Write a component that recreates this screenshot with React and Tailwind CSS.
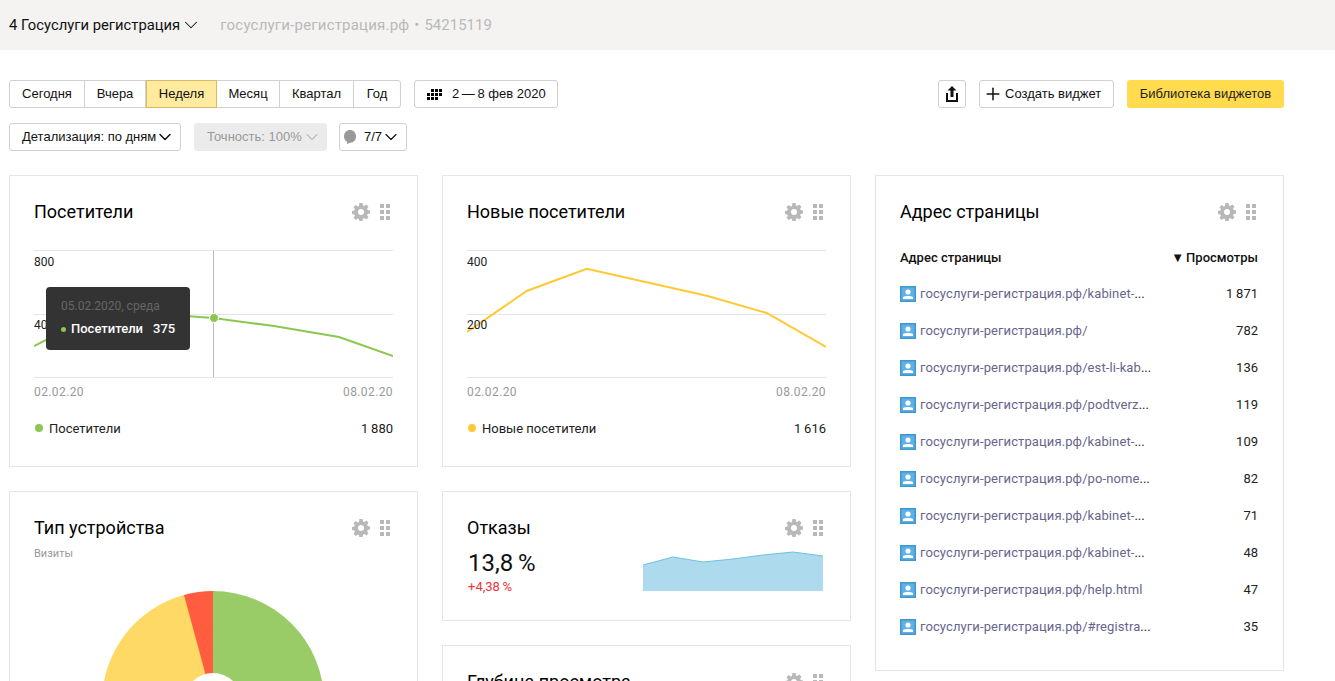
import { ChevronDown, Plus } from "lucide-react";

const FONT = "font-['Roboto','Liberation_Sans',sans-serif]";
const CONTROL = "font-['Liberation_Sans',Arial,sans-serif]";

const rows = [
  ["госуслуги-регистрация.рф/kabinet-", true, "1\u2009871"],
  ["госуслуги-регистрация.рф/", false, "782"],
  ["госуслуги-регистрация.рф/est-li-kab", true, "136"],
  ["госуслуги-регистрация.рф/podtverz", true, "119"],
  ["госуслуги-регистрация.рф/kabinet-", true, "109"],
  ["госуслуги-регистрация.рф/po-nome", true, "82"],
  ["госуслуги-регистрация.рф/kabinet-", true, "71"],
  ["госуслуги-регистрация.рф/kabinet-", true, "48"],
  ["госуслуги-регистрация.рф/help.html", false, "47"],
  ["госуслуги-регистрация.рф/#registra", true, "35"],
];

function Gear() {
  return (
    <svg viewBox="0 0 18 18" className="w-[18px] h-[18px] shrink-0" fill="#b8b8b8">
      <path d="M7.400 0h3.200l.4 2.400 1.300.6 2-1.400 2.200 2.200-1.400 2 .6 1.300 2.300.3v3.200l-2.300.4-.6 1.300 1.400 2-2.200 2.200-2-1.400-1.300.6-.4 2.300H7.400L7 16.200l-1.300-.6-2 1.400-2.200-2.200 1.400-2-.6-1.300L0 11.100V7.900l2.300-.4.6-1.300-1.400-2 2.200-2.200 2 1.400L7 3z M9 6a3 3 0 1 0 0 6 3 3 0 0 0 0-6z" fillRule="evenodd" />
    </svg>
  );
}

function Dots() {
  return (
    <div className="grid grid-cols-2 gap-[2px] w-[10px] shrink-0">
      {[0, 1, 2, 3, 4, 5].map((i) => (
        <span key={i} className="w-1 h-1 bg-[#b8b8b8]" />
      ))}
    </div>
  );
}

function WidgetHead({ title }) {
  return (
    <div className="flex items-center justify-between pr-[3px] h-6">
      <h2 className="text-[18px] leading-6 text-black font-normal">{title}</h2>
      <div className="flex items-center gap-[10px]">
        <Gear />
        <Dots />
      </div>
    </div>
  );
}

function Btn({ children, className = "" }) {
  return (
    <div className={`h-7 flex items-center bg-white border border-[#d0d0d0] rounded-[3px] text-[13px] text-[#111] whitespace-nowrap ${className}`}>
      {children}
    </div>
  );
}

function LineChart({ labels, color, points, children }) {
  return (
    <div className="relative mt-[26px] h-[128px] border-t border-b border-[#e5e5e5] w-[359px]">
      <div className="absolute left-0 right-0 top-[63px] border-t border-[#e5e5e5]" />
      <svg viewBox="0 0 359 128" className="absolute left-0 top-[-1px] w-[359px] h-[128px]" fill="none">
        <polyline points={points} stroke={color} strokeWidth="2" />
      </svg>
      <span className="absolute left-0 top-[3px] text-[12px] leading-4 text-[#222]">{labels[0]}</span>
      <span className="absolute left-0 top-[66px] text-[12px] leading-4 text-[#222]">{labels[1]}</span>
      {children}
    </div>
  );
}

function ChartFooter({ color, name, total }) {
  return (
    <>
      <div className="flex justify-between w-[359px] mt-[6px] text-[12px] leading-4 text-[#999] tracking-[0.4px]">
        <span>02.02.20</span>
        <span>08.02.20</span>
      </div>
      <div className="flex items-center justify-between w-[359px] mt-[21px] text-[13px] leading-4 text-[#222]">
        <span className="flex items-center gap-[6px] pl-px">
          <span className={`w-2 h-2 rounded-full -mt-[2px] ${color}`} />
          {name}
        </span>
        <span>{total}</span>
      </div>
    </>
  );
}

export default function App() {
  return (
    <div className={`${FONT} w-[1335px] h-[681px] overflow-hidden bg-white`}>
      <header className="h-[50px] bg-[#f4f3f1] flex items-center pl-[9px] text-[15px] whitespace-nowrap">
        <span className="text-[#111] text-[14.8px]">4 Госуслуги регистрация</span>
        <ChevronDown className="w-[22px] h-[22px] text-[#111]" strokeWidth={1.1} />
        <span className="ml-[18px] text-[#b9b9b9] tracking-[0.2px]">госуслуги-регистрация.рф</span>
        <span className="ml-[5px] text-[#b9b9b9]">•</span>
        <span className="ml-[5px] text-[#b9b9b9]">54215119</span>
      </header>

      <div className="pl-[9px] pr-[51px] pt-[30px]">
        <div className={`flex items-center ${CONTROL}`}>
          <div className="flex h-7 border border-[#d0d0d0] rounded-[3px] text-[13px] text-[#111]">
            <span className="w-[75px] flex items-center justify-center border-r border-[#d0d0d0]">Сегодня</span>
            <span className="w-[61px] flex items-center justify-center border-r border-[#d0d0d0]">Вчера</span>
            <span className="w-[71px] -my-px flex items-center justify-center bg-[#ffeba0] border border-[#d6bb68]">Неделя</span>
            <span className="w-[63px] flex items-center justify-center border-r border-[#d0d0d0]">Месяц</span>
            <span className="w-[74px] flex items-center justify-center border-r border-[#d0d0d0]">Квартал</span>
            <span className="w-[46px] flex items-center justify-center">Год</span>
          </div>
          <Btn className="ml-[13px] w-[144px] pl-[12px]">
            <svg viewBox="0 0 15 11" className="w-[15px] h-[11px] fill-black">
              <path d="M4 0h3v3H4zM8 0h3v3H8zM12 0h3v3h-3zM0 4h3v3H0zM4 4h3v3H4zM8 4h3v3H8zM12 4h3v3h-3zM0 8h3v3H0zM4 8h3v3H4zM8 8h3v3H8z" />
            </svg>
            <span className="ml-[10px]">2{"\u2009"}—{"\u2009"}8 фев 2020</span>
          </Btn>
          <div className="ml-auto flex items-center">
            <Btn className="w-[28px] justify-center">
              <svg viewBox="0 0 14 16" className="w-[14px] h-4" fill="none">
                <path d="M7 0l4.500 4.500H8.500V11h-3V4.500h-3z" fill="#111" />
                <path d="M2 7v8h10V7" stroke="#111" strokeWidth="2" />
              </svg>
            </Btn>
            <Btn className="ml-[13px] w-[135px] pl-[3px]">
              <Plus className="w-5 h-5 text-[#111]" strokeWidth={1.8} />
              <span className="ml-[2px]">Создать виджет</span>
            </Btn>
            <div className="ml-[13px] w-[157px] h-7 flex items-center justify-center bg-[#ffdb4d] rounded-[3px] text-[13px] text-[#222] whitespace-nowrap">
              Библиотека виджетов
            </div>
          </div>
        </div>

        <div className={`flex items-center mt-[15px] ${CONTROL}`}>
          <Btn className="w-[172px] pl-[12px]">
            <span>Детализация: по дням</span>
            <ChevronDown className="w-5 h-5 -ml-[1px]" strokeWidth={1.8} />
          </Btn>
          <div className="ml-[13px] w-[133px] h-7 flex items-center pl-[13px] bg-[#ebebeb] rounded-[3px] text-[13px] text-[#999] whitespace-nowrap">
            <span>Точность: 100%</span>
            <ChevronDown className="w-5 h-5" strokeWidth={1.2} />
          </div>
          <Btn className="ml-[12px] w-[68px] pl-[3px]">
            <svg viewBox="0 0 14 16" className="w-[14px] h-4" fill="#999">
              <path d="M7 1c3.300 0 6 2.500 6 6.500 0 3.500-2.300 6-5.500 6.200C6 14 4.800 14.800 3.800 15c.4-.7.5-1.500.2-2.200C2 11.700 1 9.800 1 7.500 1 3.500 3.700 1 7 1z" />
            </svg>
            <span className="ml-[7px]">7/7</span>
            <ChevronDown className="w-5 h-5 -ml-[1px]" strokeWidth={1.4} />
          </Btn>
        </div>

        <div className="flex gap-[24px] mt-[24px] items-start">
          {/* left column */}
          <div className="w-[409px] flex flex-col gap-[24px] shrink-0">
            <section className="h-[292px] border border-[#e5e5e5] px-[24px] pt-[24px]">
              <WidgetHead title="Посетители" />
              <LineChart labels={["800", "400"]} color="#8bc751" points="0,96 70,60 179,68 240,76 305,87 359,106">
                <div className="absolute left-[179px] top-0 bottom-0 border-l border-[#bbb]" />
                <span className="absolute left-[175px] top-[62px] w-2 h-2 rounded-full bg-[#8bc751] border border-white box-content" />
                <div className="absolute left-[12px] top-[36px] w-[144px] h-[63px] bg-[#333] rounded-[4px] pl-[15px] pt-[11px]">
                  <div className="text-[12px] leading-4 text-[#666]">05.02.2020, среда</div>
                  <div className="flex items-center mt-[7px] text-[13px] leading-4 font-medium text-white">
                    <span className="w-[5px] h-[5px] rounded-full bg-[#8bc751] mr-[5px]" />
                    <span>Посетители</span>
                    <span className="ml-[10px]">375</span>
                  </div>
                </div>
              </LineChart>
              <ChartFooter color="bg-[#8bc751]" name="Посетители" total={"1\u2009880"} />
            </section>

            <section className="h-[260px] border border-[#e5e5e5] px-[24px] pt-[24px]">
              <WidgetHead title="Тип устройства" />
              <div className="text-[11px] leading-4 text-[#999] mt-[6px]">Визиты</div>
              <svg viewBox="0 0 222 111" className="w-[222px] h-[111px] ml-[68px] mt-[29px]">
                <path d="M111 0A111 111 0 0 1 222 111H111z" fill="#99cc66" />
                <path d="M111 0V111H0A111 111 0 0 1 82 4z" fill="#ffd966" />
                <path d="M82 4A111 111 0 0 1 111 0V111z" fill="#ff5c40" />
                <circle cx="111" cy="111" r="29" fill="#fff" />
              </svg>
            </section>
          </div>

          {/* middle column */}
          <div className="w-[409px] flex flex-col gap-[24px] shrink-0">
            <section className="h-[292px] border border-[#e5e5e5] px-[24px] pt-[24px]">
              <WidgetHead title="Новые посетители" />
              <LineChart labels={["400", "200"]} color="#ffc933" points="0,82 59.700,41 119.700,18.700 239.700,45.700 299.700,63 359,97" />
              <ChartFooter color="bg-[#ffc933]" name="Новые посетители" total={"1\u2009616"} />
            </section>

            <section className="h-[130px] border border-[#e5e5e5] px-[24px] pt-[24px] relative">
              <WidgetHead title="Отказы" />
              <div className="text-[24px] leading-7 text-[#111] mt-[9px] ml-px">13,8{"\u2009"}%</div>
              <div className="text-[13px] leading-4 text-[#f0333c] mt-[2px] ml-px">+4,38{"\u2009"}%</div>
              <svg viewBox="0 0 180 40" className="absolute left-[200px] top-[59px] w-[180px] h-[40px]">
                <path d="M0 14 30 6 60 11 90 8 120 4 150 1 180 5V40H0z" fill="#addaec" />
                <path d="M0 14 30 6 60 11 90 8 120 4 150 1 180 5" fill="none" stroke="#6cc3e0" strokeWidth="1" />
              </svg>
            </section>

            <section className="h-[130px] border border-[#e5e5e5] px-[24px] pt-[24px]">
              <WidgetHead title="Глубина просмотра" />
            </section>
          </div>

          {/* right column */}
          <section className="w-[409px] h-[496px] shrink-0 border border-[#e5e5e5] px-[24px] pt-[24px]">
            <WidgetHead title="Адрес страницы" />
            <div className="flex justify-between mt-[26px] pr-px text-[13px] leading-4 font-medium text-[#111]">
              <span>Адрес страницы</span>
              <span className="flex items-center">
                <span className="text-[13px] mr-[2px]">▼</span>
                Просмотры
              </span>
            </div>
            <div className="flex flex-col mt-[9px] pr-px">
              {rows.map(([url, cut, views], i) => (
                <div key={i} className="h-[37px] flex items-center justify-between text-[13px]">
                  <span className="flex items-center">
                    <svg viewBox="0 0 16 16" className="w-4 h-4 shrink-0 mr-[4px]">
                      <rect width="16" height="16" fill="#3f97d0" />
                      <rect x="1.500" y="1.500" width="13" height="13" fill="#5fb0e6" />
                      <circle cx="8" cy="6" r="2.600" fill="#fff" />
                      <path d="M3 13v-2c1.500-.6 3-1 5-1s3.500.4 5 1v2z" fill="#fff" />
                    </svg>
                    <span className="text-[#66668c] tracking-[0.1px]">{url}</span>
                    {cut && <span className="text-[#222]">...</span>}
                  </span>
                  <span className="text-[#222]">{views}</span>
                </div>
              ))}
            </div>
          </section>
        </div>
      </div>
    </div>
  );
}
